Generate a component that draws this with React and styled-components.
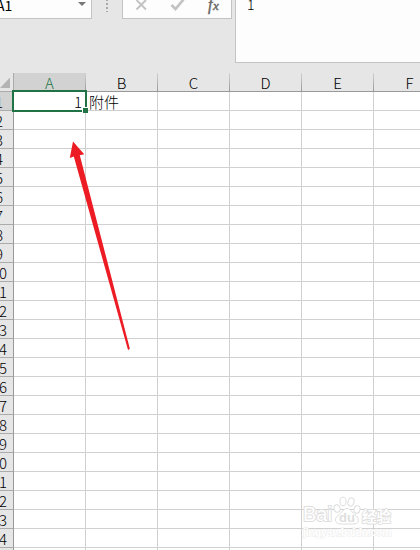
import styled, { createGlobalStyle } from "styled-components"

const columns = ["A", "B", "C", "D", "E", "F"]
const rows = Array.from({ length: 25 }, (_, i) => i + 1)
const cells = { A1: "1", B1: "附件" }

const App = () => {
    return(
        <Window>
            <GlobalStyle/>
            <FormulaBar>
                <NameBox>
                    <span>A1</span>
                    <Caret/>
                </NameBox>
                <Grip>
                    <i/><i/><i/><i/>
                </Grip>
                <Buttons>
                    <svg width="108" height="18" viewBox="0 0 108 18" fill="none">
                        <path d="M13.5 0L23 9.5M23 0L13.5 9.5" stroke="#c3c3c3" strokeWidth="2"/>
                        <path d="M48.5 5L52.5 9L60.5 -0.5" stroke="#c3c3c3" strokeWidth="2.7"/>
                    </svg>
                    <Fx>f<small>x</small></Fx>
                </Buttons>
                <Formula>1</Formula>
            </FormulaBar>
            <Sheet>
                <Corner>
                    <svg width="13" height="18">
                        <path d="M10 4.5V15H0Z" fill="#b4b4b4"/>
                    </svg>
                </Corner>
                {columns.map(col => (
                    <ColumnHead key={col} $active={col === "A"}>{col}</ColumnHead>
                ))}
                {rows.map(row => (
                    <Row key={row}>
                        <RowHead $active={row === 1}>
                            {row < 25 && <span>{row}</span>}
                        </RowHead>
                        {columns.map(col => (
                            <Cell key={col} $number={col === "A"}>
                                {cells[col + row]}
                                {col + row === "A1" && <Selection/>}
                            </Cell>
                        ))}
                    </Row>
                ))}
            </Sheet>
            <Arrow width="66" height="214" viewBox="66 138 66 214">
                <path d="M73 141.5L84.2 154.2L79.8 155.2L129.8 348.5L128.6 350L127.8 349.2L73.8 156.5L69.8 158Z" fill="#ed1c24"/>
            </Arrow>
            <Watermark>
                <Brand>
                    <b>Bai</b>
                    <svg width="28" height="29" viewBox="0 0 28 29">
                        <g fill="#fff" stroke="#dedede">
                            <ellipse cx="4" cy="12.5" rx="3" ry="3.8" transform="rotate(-12 4 12.5)"/>
                            <ellipse cx="10" cy="5.5" rx="3" ry="4.3"/>
                            <ellipse cx="18" cy="6" rx="3" ry="4.2" transform="rotate(15 18 6)"/>
                            <ellipse cx="24" cy="13.5" rx="3" ry="3.8" transform="rotate(12 24 13.5)"/>
                            <path d="M14 12.5C10 12.5 9 17 5 19.5C0 23 3 28.5 8 28H20C26 28.5 27 23 23 19.5C19 17 18 12.5 14 12.5Z"/>
                        </g>
                        <text x="14" y="26" textAnchor="middle" fontSize="13" fontWeight="700" fill="#dedede">du</text>
                    </svg>
                    <Label>经验</Label>
                </Brand>
                <Site>jingyan.baidu.com</Site>
            </Watermark>
        </Window>
    )
}

const GlobalStyle = createGlobalStyle`
  body {
    margin: 0;
    overflow: hidden;
  }
`
const Window = styled.div`
  width: 420px;
  height: 550px;
  position: relative;
  overflow: hidden;
  background: #e6e6e6;
  font-family: "Noto Sans CJK SC", sans-serif;
  font-size: 15px;
  font-weight: 300;
  color: #000;
`
const FormulaBar = styled.div`
  display: flex;
  align-items: flex-start;
  height: 73px;
`
const NameBox = styled.div`
  width: 91px;
  height: 18px;
  display: flex;
  justify-content: space-between;
  background: #fdfdfd;
  border-right: 1px solid #c3c3c3;
  border-bottom: 1px solid #c3c3c3;
  font-size: 14px;
  font-weight: 400;
  line-height: 10px;

  span {
    margin-left: -4px;
  }
`
const Caret = styled.div`
  margin: 2px 5px 0 0;
  width: 0;
  height: 0;
  border: 4px solid transparent;
  border-top-color: #777;
  border-bottom: 0;
`
const Grip = styled.div`
  width: 30px;
  height: 12px;
  display: flex;
  flex-direction: column;
  align-items: center;
  gap: 2px;

  i {
    width: 2px;
    height: 2px;
    background: #a9a9a9;
  }
  i:first-child {
    height: 1px;
  }
  i:last-child {
    height: 1px;
  }
`
const Buttons = styled.div`
  width: 108px;
  height: 18px;
  display: flex;
  background: #fdfdfd;
  border: solid #c3c3c3;
  border-width: 0 1px 1px;

  svg {
    flex: none;
  }
`
const Fx = styled.span`
  margin-left: -23px;
  font: italic 16px/9px "Liberation Serif", serif;
  -webkit-text-stroke: 0.4px #666;
  color: #666;

  small {
    margin-left: 0.5px;
    font-size: 13px;
  }
`
const Formula = styled.div`
  flex: 1;
  height: 62px;
  margin-left: 3px;
  padding-left: 11px;
  background: #fdfdfd;
  border-left: 1px solid #c3c3c3;
  border-bottom: 1px solid #c3c3c3;
  font-size: 14px;
  line-height: 8px;
`
const Sheet = styled.div`
  width: 446px;
  display: grid;
  grid-template-columns: 14px repeat(6, 72px);
  grid-auto-rows: 19px;
  background: #fff;
`
const Corner = styled.div`
  background: #e6e6e6;
  border-right: 1px solid #ababab;
  border-bottom: 1px solid #ababab;
  box-sizing: border-box;
  overflow: hidden;
`
const ColumnHead = styled.div`
  box-sizing: border-box;
  padding-right: 1px;
  text-align: center;
  line-height: 19px;
  border-bottom: 1px solid #999;
  background: linear-gradient(#d2d2d2, #999) right / 1px 100% no-repeat ${props => props.$active ? "#d2d2d2" : "#e6e6e6"};
  color: ${props => props.$active ? "#217346" : "#000"};
`
const Row = styled.div`
  display: contents;
`
const RowHead = styled.div`
  box-sizing: border-box;
  display: flex;
  justify-content: center;
  overflow: hidden;
  line-height: 20px;
  border-right: 1px solid #999;
  border-bottom: 1px solid #ababab;
  background: ${props => props.$active ? "#d2d2d2" : "#e6e6e6"};

  span {
    flex: none;
    margin: 0 -7px 0 -22px;
  }
`
const Cell = styled.div`
  box-sizing: border-box;
  position: relative;
  padding: 0 3px;
  line-height: 20px;
  text-align: ${props => props.$number ? "right" : "left"};
  border-right: 1px solid #d0d0d0;
  border-bottom: 1px solid #d0d0d0;
`
const Selection = styled.div`
  position: absolute;
  z-index: 1;
  inset: -2px;
  border: 2px solid #217346;

  &::after {
    content: "";
    position: absolute;
    right: -3px;
    bottom: -3px;
    width: 5px;
    height: 5px;
    background: #217346;
    border: solid #fff;
    border-width: 1px 0 0 1px;
  }
`
const Arrow = styled.svg`
  position: absolute;
  left: 66px;
  top: 138px;
`
const Watermark = styled.div`
  position: absolute;
  left: 303px;
  top: 495px;
  width: 90px;
  color: #fff;
  font-family: "Liberation Sans", "Noto Sans CJK SC", sans-serif;
`
const Brand = styled.div`
  display: flex;
  align-items: flex-end;
  height: 30px;

  b {
    width: 30px;
    font-size: 20px;
    line-height: 22px;
    paint-order: stroke;
    -webkit-text-stroke: 2px #dedede;
  }
`
const Label = styled.span`
  margin-left: 1px;
  font: 700 14.5px/18px "Noto Sans CJK SC", sans-serif;
  paint-order: stroke;
  -webkit-text-stroke: 1.6px #dedede;
  height: 18px;
`
const Site = styled.div`
  font-size: 11px;
  line-height: 14px;
  font-weight: 700;
  letter-spacing: -0.48px;
  white-space: nowrap;
  paint-order: stroke;
  -webkit-text-stroke: 1px #ebebeb;
`

export default App
